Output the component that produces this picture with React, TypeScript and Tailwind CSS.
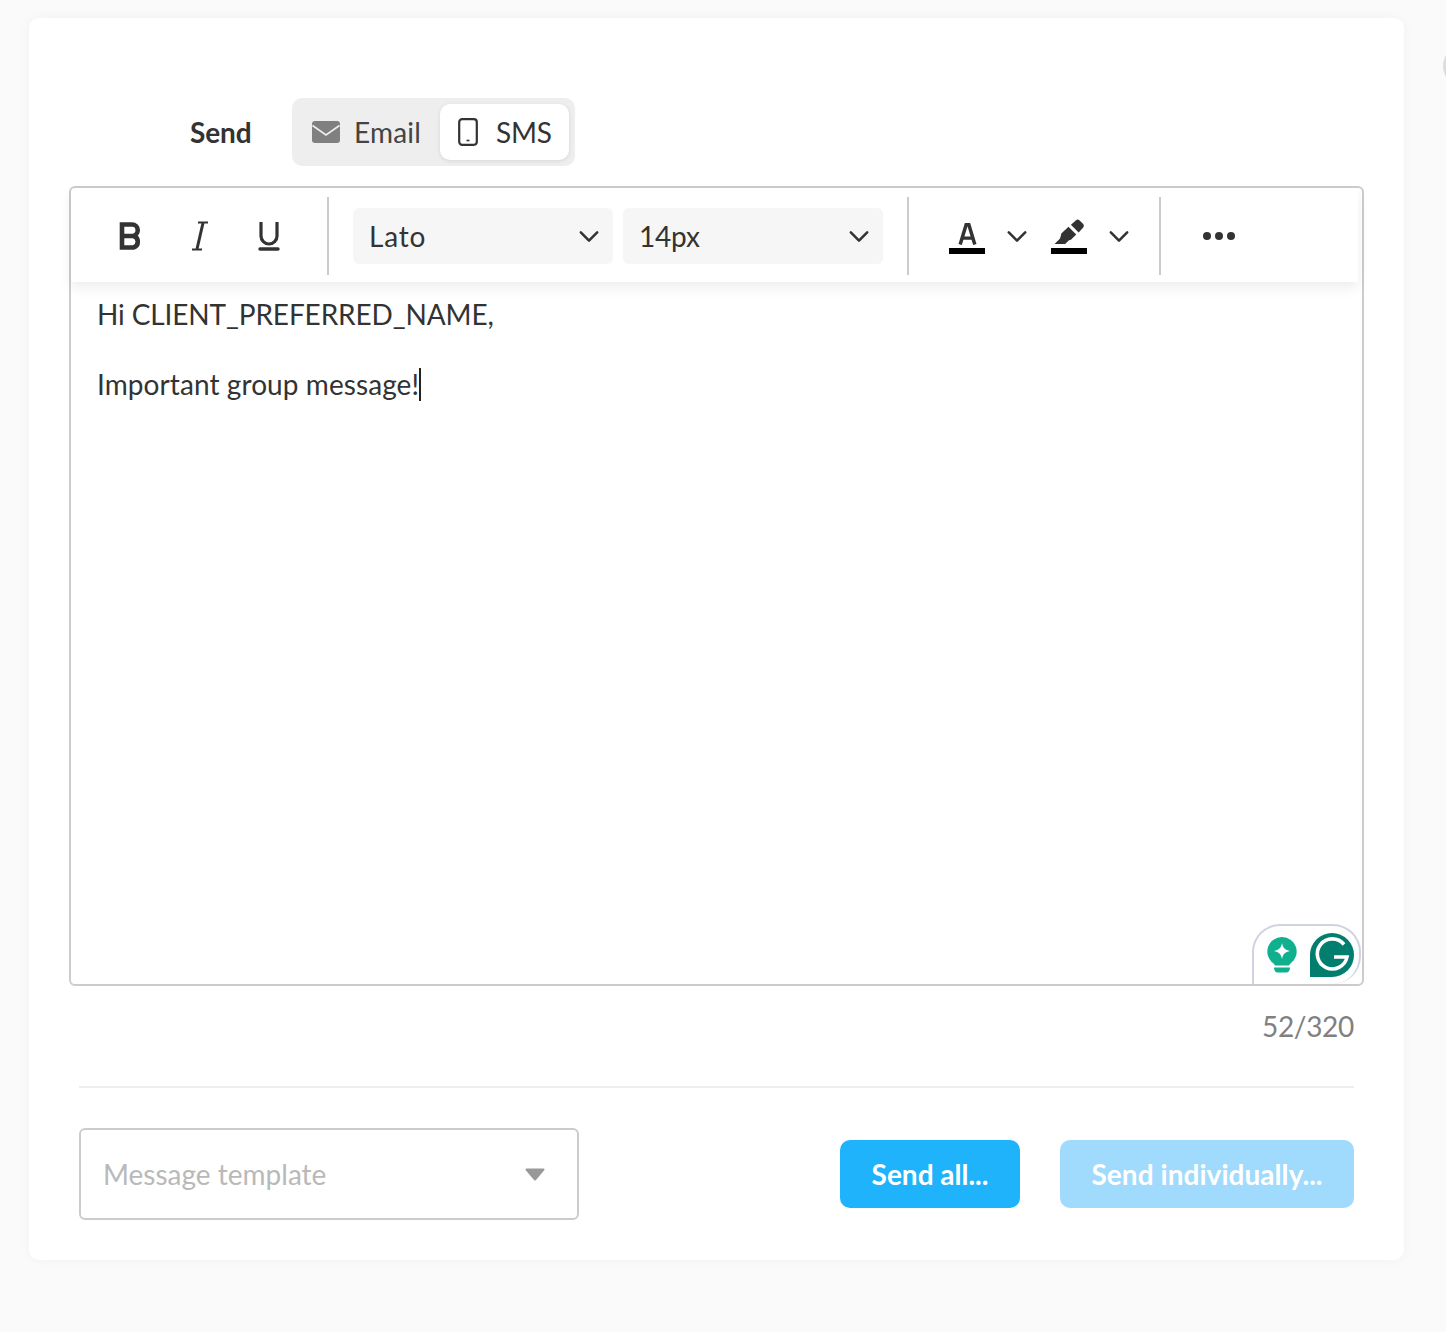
import React from "react";

const font = { fontFamily: "Lato, sans-serif" };

function Chevron({ className = "" }: { className?: string }) {
  return (
    <svg viewBox="0 0 22 14" className={className} fill="none" stroke="#333" strokeWidth="2.8" strokeLinecap="round" strokeLinejoin="round">
      <path d="M2 2.5 L11 11.5 L20 2.5" />
    </svg>
  );
}

function Divider() {
  return <div className="w-[2px] h-[78px] bg-[#cccccc] shrink-0" />;
}

function Select({ label, wide }: { label: string; wide?: boolean }) {
  return (
    <div className="w-[260px] h-[56px] rounded-[6px] bg-[#f6f6f6] flex items-center justify-between pl-[16px] pr-[14px] text-[28px] text-[#333]">
      <span className={wide ? "tracking-[0.8px]" : "tracking-[-0.2px]"}>{label}</span>
      <Chevron className="w-[20px] h-[13px]" />
    </div>
  );
}

export default function App() {
  return (
    <div className="w-[1446px] h-[1332px] bg-[#fafafa] pt-[18px] pl-[29px] relative overflow-hidden" style={font}>
      <div className="absolute left-[1443px] top-[45px] w-[60px] h-[42px] rounded-full bg-[#dcdcdc]" />
      <div className="w-[1375px] h-[1242px] bg-white rounded-[10px] px-[40px] pt-[80px] shadow-[0_0_12px_rgba(0,0,0,0.04)]">
        <div className="flex items-center h-[68px] pl-[121px]">
          <span className="text-[28px] font-bold text-[#333] tracking-[-0.1px] w-[102px]">Send</span>
          <div className="h-[68px] w-[283px] rounded-[10px] bg-[#eeeeee] flex items-center pl-[6px]">
            <div className="h-[56px] w-[142px] flex items-center pl-[14px] text-[28px] text-[#444] tracking-[0.2px]">
              <svg viewBox="0 0 28 22" className="w-[28px] h-[22px] mr-[14px]">
                <path fill="#808080" d="M3 0h22a3 3 0 0 1 3 3v16a3 3 0 0 1-3 3H3a3 3 0 0 1-3-3V3a3 3 0 0 1 3-3z" />
                <path fill="none" stroke="#eeeeee" strokeWidth="1.6" d="M0.5 4.5 L14 14 L27.500 4.500" />
              </svg>
              <span>Email</span>
            </div>
            <div className="h-[56px] w-[129px] rounded-[10px] bg-white shadow-[0_1px_4px_rgba(0,0,0,0.1)] flex items-center pl-[18px] text-[28px] text-[#333] tracking-[-0.2px]">
              <svg viewBox="0 0 20 28" className="w-[20px] h-[28px] mr-[18px]" fill="none">
                <rect x="1.200" y="1.200" width="17.600" height="25.600" rx="3" stroke="#333" strokeWidth="2.200" />
                <path d="M8.500 22.500h3" stroke="#333" strokeWidth="1.600" />
              </svg>
              <span>SMS</span>
            </div>
          </div>
        </div>

        <div className="mt-[20px] h-[800px] border-2 border-[#cccccc] rounded-[6px] relative text-[#333]">
          <div className="h-[94px] flex items-center pt-[2px] mr-[4px] shadow-[0_6px_12px_rgba(0,0,0,0.07)] relative">
            <div className="w-[256px] flex items-center shrink-0">
              <svg viewBox="0 0 24 30" className="w-[24px] h-[30px] ml-[48px]">
                <path fill="none" stroke="#333" strokeWidth="4.600" d="M3 3.500h10a5.700 5.700 0 0 1 0 11.500H3zM3 15h11.500a6 6 0 0 1 0 11.500H3z" />
              </svg>
              <svg viewBox="0 0 18 30" className="w-[18px] h-[30px] ml-[48px]">
                <path fill="none" stroke="#333" strokeWidth="1.800" d="M7 1.500h10M1 28.500h10" />
                <path fill="none" stroke="#333" strokeWidth="3" d="M12 2 6 28" />
              </svg>
              <svg viewBox="0 0 22 30" className="w-[22px] h-[30px] ml-[49px]">
                <path fill="none" stroke="#333" strokeWidth="3.200" d="M3 1v14a8 8 0 0 0 16 0V1" />
                <path stroke="#333" strokeWidth="3.400" strokeLinecap="round" d="M2 28h18" />
              </svg>
            </div>
            <Divider />
            <div className="flex items-center gap-[10px] pl-[24px] pr-[24px] shrink-0">
              <Select label="Lato" wide />
              <Select label="14px" />
            </div>
            <Divider />
            <div className="w-[250px] flex items-center shrink-0">
              <div className="ml-[40px] w-[36px] h-[36px] flex flex-col items-center justify-end relative">
                <svg viewBox="0 0 20 24" className="w-[19px] h-[22px] mb-[3px]">
                  <path fill="none" stroke="#333" strokeWidth="3.800" d="M2 23.500 8.500 2h3L18 23.500M5 16.500h10" />
                </svg>
                <div className="w-[36px] h-[6px] bg-black" />
              </div>
              <Chevron className="w-[20px] h-[13px] ml-[22px]" />
              <div className="ml-[24px] w-[36px] h-[36px] flex flex-col items-center justify-end">
                <svg viewBox="0 0 32 28" className="w-[32px] h-[27px] mb-[2px]">
                  <path fill="#333" d="M23 1.500a3 3 0 0 1 4 0l3.500 3.500a3 3 0 0 1 0 4l-4.500 5-8-8zM15.500 8l8 8-5.500 5.500-2 .5-3 3-1 1H1l5.500-5.500 1-3 .5-2.500z" />
                </svg>
                <div className="w-[36px] h-[6px] bg-black" />
              </div>
              <Chevron className="w-[20px] h-[13px] ml-[22px]" />
            </div>
            <Divider />
            <div className="ml-[42px] flex gap-[4px]">
              <div className="w-[8px] h-[8px] rounded-full bg-[#333]" />
              <div className="w-[8px] h-[8px] rounded-full bg-[#333]" />
              <div className="w-[8px] h-[8px] rounded-full bg-[#333]" />
            </div>
          </div>

          <div className="pl-[26px] pt-[15px] text-[28px] leading-[35px] text-[#333]">
            <p className="tracking-[-0.12px]">Hi CLIENT_PREFERRED_NAME,</p>
            <p className="h-[35px]" />
            <p className="flex items-center tracking-[0.08px]">
              Important group message!
              <span className="inline-block w-[2px] h-[33px] bg-[#222]" />
            </p>
          </div>

          <div className="absolute right-[1px] bottom-[0px] w-[109px] h-[60px] rounded-tl-[28px] rounded-tr-[28px] rounded-br-[28px] border-l-2 border-t-2 border-r-2 border-[#d0d3e0] bg-white flex items-center pl-[13px]">
            <svg viewBox="0 0 30 38" className="w-[30px] h-[38px]">
              <path fill="#10b08f" d="M15 1a14.500 14.500 0 0 1 9 26c-1 1-1.500 1.500-2 2.500H8c-.5-1-1-1.500-2-2.500A14.500 14.500 0 0 1 15 1z" />
              <path fill="#fff" d="M15 7c1 5 3 7 8 8-5 1-7 3-8 8-1-5-3-7-8-8 5-1 7-3 8-8z" />
              <path fill="#10b08f" d="M7 31.500h16c0 3-1.500 5-4 5h-8c-2.500 0-4-2-4-5z" />
            </svg>
            <svg viewBox="0 0 44 44" className="w-[44px] h-[44px] ml-[13px]">
              <path fill="#027e6f" d="M22 0a22 22 0 0 1 0 44H0V22A22 22 0 0 1 22 0z" />
              <path fill="none" stroke="#fff" strokeWidth="3.600" d="M34 11.500A15 15 0 1 0 37 24H24" />
            </svg>
          </div>
        </div>

        <div className="mx-[10px]">
          <div className="mt-[23px] h-[35px] leading-[35px] text-right text-[28px] text-[#808080] tracking-[-0.3px]">52/320</div>
          <div className="mt-[42px] h-[2px] bg-[#eeeeee]" />
          <div className="mt-[40px] flex items-center justify-between">
            <div className="w-[500px] h-[92px] border-2 border-[#cccccc] rounded-[6px] flex items-center justify-between pl-[22px] pr-[32px] text-[28px] text-[#b9b9b9] tracking-[0px]">
              <span>Message template</span>
              <svg viewBox="0 0 20 13" className="w-[20px] h-[13px]">
                <path fill="#999" stroke="#999" strokeWidth="2" strokeLinejoin="round" d="M1.500 1.500h17L10 11.500z" />
              </svg>
            </div>
            <div className="flex gap-[40px]">
              <div className="w-[180px] h-[68px] rounded-[10px] bg-[#1fb3fb] text-white font-bold text-[28px] tracking-[0px] flex items-center justify-center">Send all...</div>
              <div className="w-[294px] h-[68px] rounded-[10px] bg-[#a0dafc] text-white font-bold text-[28px] tracking-[0.05px] flex items-center justify-center">Send individually...</div>
            </div>
          </div>
        </div>
      </div>
    </div>
  );
}
